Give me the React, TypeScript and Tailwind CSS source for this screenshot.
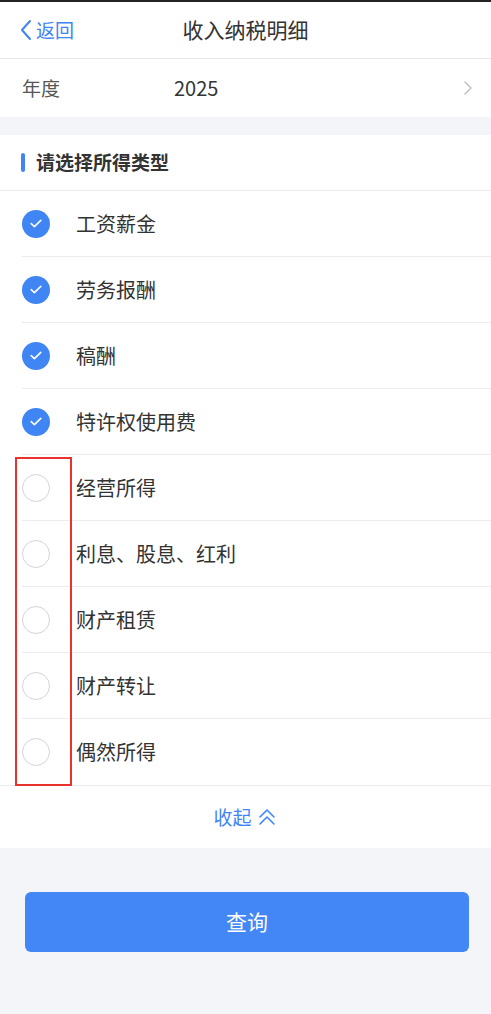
import React from "react";

const items = [
  { label: "工资薪金", checked: true },
  { label: "劳务报酬", checked: true },
  { label: "稿酬", checked: true },
  { label: "特许权使用费", checked: true },
  { label: "经营所得", checked: false },
  { label: "利息、股息、红利", checked: false },
  { label: "财产租赁", checked: false },
  { label: "财产转让", checked: false },
  { label: "偶然所得", checked: false },
];

const font = { fontFamily: '"Noto Sans CJK SC", "Noto Sans", sans-serif' };

const CheckIcon = ({ checked }: { checked: boolean }) =>
  checked ? (
    <div className="w-[28px] h-[28px] rounded-full bg-[#3f85f4] flex items-center justify-center">
      <svg width="12" height="9" viewBox="0 0 12 9" fill="none">
        <path d="M1.2 4.6 L4.4 7.6 L10.8 1.4" stroke="white" strokeWidth="1.6" strokeLinecap="round" strokeLinejoin="round" />
      </svg>
    </div>
  ) : (
    <div className="w-[28px] h-[28px] rounded-full border-[1.5px] border-[#d4d4d8] bg-white" />
  );

export default function App() {
  return (
    <div className="relative w-[491px] h-[1014px] bg-[#f4f5f9] text-[#333] flex flex-col" style={font}>
      <div className="h-[2px] bg-[#222]" />
      <div className="h-[57px] bg-white border-b border-[#e6e6e9] relative flex items-center justify-center">
        <div className="absolute left-[19px] top-0 h-full flex items-center text-[#3f85f4] text-[19px]">
          <svg width="14" height="22" viewBox="0 0 14 22" fill="none" className="mr-[3px]">
            <path d="M11 2 L3 11 L11 20" stroke="#3f85f4" strokeWidth="2" strokeLinecap="round" strokeLinejoin="round" />
          </svg>
          返回
        </div>
        <div className="text-[21px] text-[#333]">收入纳税明细</div>
      </div>
      <div className="h-[58px] bg-white flex items-center pl-[22px] pr-[18px]">
        <div className="w-[152px] text-[19px] text-[#555]">年度</div>
        <div className="flex-1 text-[20px] text-[#333]">2025</div>
        <svg width="10" height="16" viewBox="0 0 10 16" fill="none">
          <path d="M2 2 L8 8 L2 14" stroke="#c4c4c8" strokeWidth="1.6" strokeLinecap="round" strokeLinejoin="round" />
        </svg>
      </div>
      <div className="h-[18px]" />
      <div className="bg-white">
        <div className="h-[56px] flex items-center pl-[21px] border-b border-[#ececef]">
          <div className="w-[4px] h-[19px] rounded-full bg-[#3f85f4] mr-[11px]" />
          <div className="text-[19px] font-bold text-[#333]">请选择所得类型</div>
        </div>
        <div className="pl-[22px]">
          {items.map((it, i) => (
            <div
              key={it.label}
              className={
                "h-[66px] flex items-center " + (i < items.length - 1 ? "border-b border-[#ececef]" : "")
              }
            >
              <CheckIcon checked={it.checked} />
              <div className="ml-[26px] text-[20px] text-[#333]">{it.label}</div>
            </div>
          ))}
        </div>
        <div className="h-[63px] border-t border-[#ececef] flex items-center justify-center text-[#3f85f4] text-[19px]">
          收起
          <svg width="22" height="22" viewBox="0 0 22 22" fill="none" className="ml-[4px]">
            <path d="M4 11 L11 4 L18 11" stroke="#3f85f4" strokeWidth="1.6" strokeLinecap="round" strokeLinejoin="round" />
            <path d="M4 18 L11 11 L18 18" stroke="#3f85f4" strokeWidth="1.6" strokeLinecap="round" strokeLinejoin="round" />
          </svg>
        </div>
      </div>
      <div className="pl-[25px] pr-[22px] pt-[44px]">
        <div className="h-[60px] rounded-[6px] bg-[#4287f5] flex items-center justify-center text-white text-[21px]">
          查询
        </div>
      </div>
      <div className="pointer-events-none absolute left-[15px] top-[457px] w-[57px] h-[329px] border-[2px] border-[#e8322b]" />
    </div>
  );
}
